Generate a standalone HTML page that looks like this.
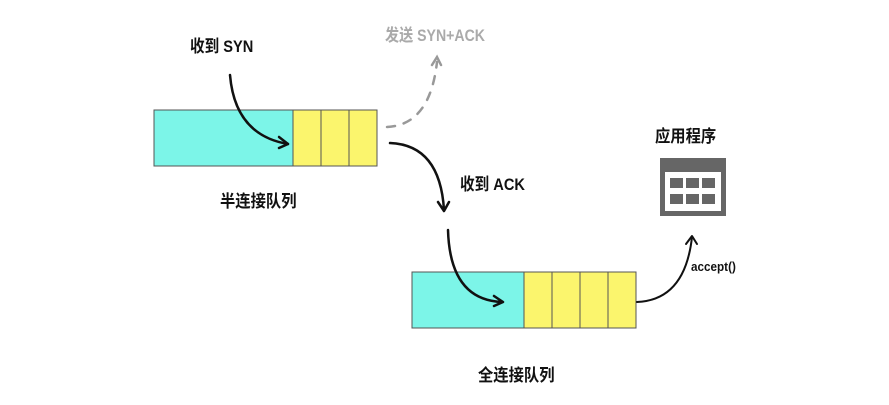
<!DOCTYPE html>
<html><head><meta charset="utf-8"><style>
body{margin:0;width:889px;height:405px;background:#fff;overflow:hidden;position:relative;font-family:"Liberation Sans","Noto Sans CJK SC",sans-serif;font-weight:bold}
.t{position:absolute;font-size:17px;color:#111;white-space:nowrap;transform:scaleX(0.9);transform-origin:left}
</style></head><body>
<svg width="889" height="405" style="position:absolute;left:0;top:0">
<g stroke="#555" stroke-width="1">
<rect x="154" y="110" width="139" height="56" fill="#7cf5e8"/>
<rect x="293" y="110" width="28" height="56" fill="#fbf56d"/>
<rect x="321" y="110" width="28" height="56" fill="#fbf56d"/>
<rect x="349" y="110" width="28" height="56" fill="#fbf56d"/>
<rect x="412" y="272" width="112" height="56" fill="#7cf5e8"/>
<rect x="524" y="272" width="28" height="56" fill="#fbf56d"/>
<rect x="552" y="272" width="28" height="56" fill="#fbf56d"/>
<rect x="580" y="272" width="28" height="56" fill="#fbf56d"/>
<rect x="608" y="272" width="28" height="56" fill="#fbf56d"/>
</g>
<rect x="660" y="158" width="66" height="58" fill="#666"/>
<rect x="665" y="172" width="56" height="39" fill="#fff"/>
<g fill="#666">
<rect x="670" y="178" width="13" height="10"/><rect x="686" y="178" width="13" height="10"/><rect x="702" y="178" width="13" height="10"/>
<rect x="670" y="194" width="13" height="10"/><rect x="686" y="194" width="13" height="10"/><rect x="702" y="194" width="13" height="10"/>
</g>
<g fill="none" stroke="#111" stroke-width="2.5" stroke-linecap="round" stroke-linejoin="round">
<path d="M230 75 Q235 135 288 144"/><path d="M279 137 L288 144 L279 148"/>
<path d="M390 143 Q440 145 444 210"/><path d="M438 202 L444 211 L449 202"/>
<path d="M448 230 Q450 300 502 302"/><path d="M494 296 L503 302 L494 306"/>
<path d="M637 302 Q685 300 692 237" stroke-width="2"/><path d="M686 244 L692 236 L697 244" stroke-width="2"/>
</g>
<g fill="none" stroke="#999" stroke-width="2.5" stroke-linecap="round">
<path d="M387 127 Q430 125 437 62" stroke-dasharray="8 9"/>
<path d="M432 65 L437 57 L441 65"/>
</g>
</svg>
<div class="t" style="left:190px;top:32px;transform:scaleX(0.86)">收到 SYN</div>
<div class="t" style="left:385px;top:21px;color:#aaa;transform:scaleX(0.83)">发送 SYN+ACK</div>
<div class="t" style="left:220px;top:187px">半连接队列</div>
<div class="t" style="left:460px;top:170px;transform:scaleX(0.86)">收到 ACK</div>
<div class="t" style="left:655px;top:122px">应用程序</div>
<div class="t" style="left:691px;top:259px;font-size:13px">accept()</div>
<div class="t" style="left:478px;top:361px">全连接队列</div>
</body></html>
